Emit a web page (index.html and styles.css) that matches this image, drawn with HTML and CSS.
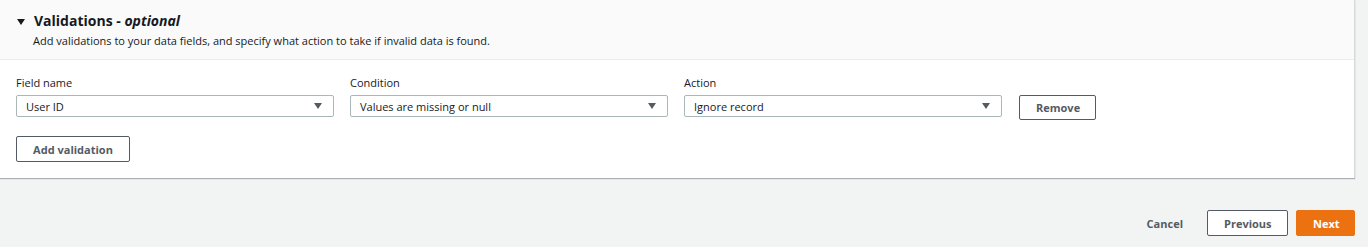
FILE: index.html
```html
<!DOCTYPE html>
<html lang="en">
<head>
    <meta charset="UTF-8">
    <title>Validations</title>
    <link rel="stylesheet" href="styles.css">
</head>
<body>

<div class="panel">
    <div class="panelHeader">
        <div class="titleRow">
            <span class="caret"></span>
            <h2>Validations - <i>optional</i></h2>
        </div>
        <p class="description">Add validations to your data fields, and specify what action to take if invalid data is found.</p>
    </div>
    <div class="panelBody">
        <div class="validationRow">
            <div class="field">
                <label>Field name</label>
                <div class="select"><span>User ID</span><span class="arrow"></span></div>
            </div>
            <div class="field">
                <label>Condition</label>
                <div class="select"><span>Values are missing or null</span><span class="arrow"></span></div>
            </div>
            <div class="field">
                <label>Action</label>
                <div class="select"><span>Ignore record</span><span class="arrow"></span></div>
            </div>
            <button type="button" class="btn removeButton">Remove</button>
        </div>
        <button type="button" class="btn addButton">Add validation</button>
    </div>
</div>

<div class="footer">
    <button type="button" class="linkButton">Cancel</button>
    <button type="button" class="btn">Previous</button>
    <button type="button" class="btn primary">Next</button>
</div>

</body>
</html>
```

FILE: styles.css
```css
body {
    margin: 0;
    background-color: #f2f3f3;
    font-family: "Open Sans", "Liberation Sans", sans-serif;
    color: #16191f;
    font-size: 12px;
}
.panel {
    width: 1355px;
    background: #fff;
    border-right: 1px solid #d5dbdb;
    box-shadow: 0 1px 1px 0 rgba(0, 28, 36, 0.3);
    box-sizing: border-box;
}
.panelHeader {
    background: #fafafa;
    border-bottom: 1px solid #eaeded;
    height: 60px;
    padding: 12px 16px 0 16px;
    box-sizing: border-box;
}
.titleRow {
    display: flex;
    align-items: center;
    gap: 9px;
}
.caret {
    width: 0;
    height: 0;
    border-left: 4px solid transparent;
    border-right: 4px solid transparent;
    border-top: 6px solid #16191f;
    margin-left: 1px;
    margin-top: 2px;
}
h2 {
    margin: 0;
    font-size: 14px;
    font-weight: bold;
    line-height: 18px;
}
.description {
    margin: 3px 0 0 17px;
    font-size: 11px;
    line-height: 16px;
}
.panelBody {
    padding: 15px 16px 16px 16px;
}
.validationRow {
    display: flex;
    align-items: flex-end;
    gap: 16px;
}
.field {
    width: 318px;
}
label {
    display: block;
    font-size: 11px;
    line-height: 16px;
    margin-bottom: 4px;
}
.select {
    display: flex;
    justify-content: space-between;
    align-items: center;
    height: 22px;
    box-sizing: border-box;
    border: 1px solid #aab7b8;
    border-radius: 2px;
    padding: 0 11px 0 9px;
    font-size: 11px;
}
.arrow {
    width: 0;
    height: 0;
    border-left: 4px solid transparent;
    border-right: 4px solid transparent;
    border-top: 6px solid #545b64;
}
.btn {
    font-family: inherit;
    font-size: 11px;
    font-weight: bold;
    color: #545b64;
    background: #fff;
    border: 1px solid #545b64;
    border-radius: 2px;
    height: 25px;
    padding: 0 16px;
    cursor: pointer;
}
.removeButton {
    width: 77px;
    height: 25px;
    margin-left: 1px;
    margin-bottom: -3px;
}
.addButton {
    margin-top: 19px;
    width: 114px;
    height: 26px;
}
.footer {
    display: flex;
    justify-content: flex-end;
    align-items: center;
    gap: 8px;
    width: 1355px;
    padding-top: 32px;
}
.footer .btn {
    width: 81px;
    height: 26px;
}
.linkButton {
    font-family: inherit;
    font-size: 11px;
    font-weight: bold;
    color: #545b64;
    background: none;
    border: none;
    margin-right: 10px;
}
.footer .primary {
    width: 59px;
    background: #ec7211;
    border-color: #ec7211;
    color: #fff;
}
```
